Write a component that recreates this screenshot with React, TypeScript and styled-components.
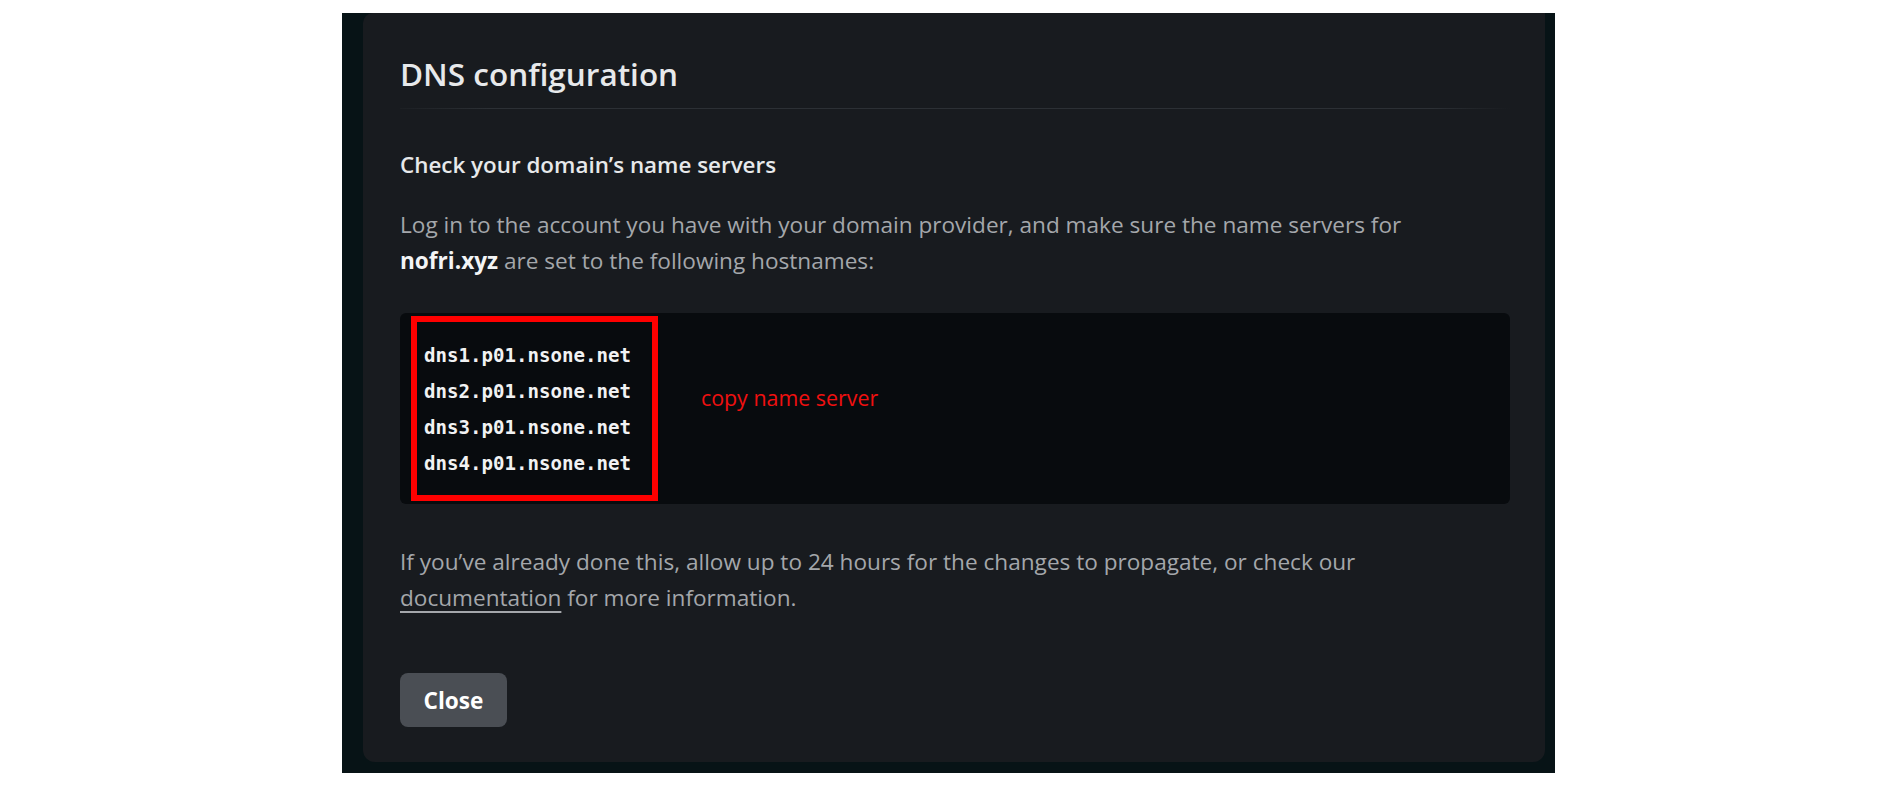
import React from "react";
import styled, { createGlobalStyle } from "styled-components";

const GlobalStyle = createGlobalStyle`
  html, body { margin: 0; padding: 0; background: #ffffff; }
  * { box-sizing: border-box; }
`;

const Page = styled.div`
  padding: 13px 0 0 342px;
  font-family: "Segoe UI", "Open Sans", "Noto Sans", sans-serif;
`;

const Backdrop = styled.div`
  width: 1213px;
  height: 760px;
  background: #071316;
  padding-left: 21px;
  display: flex;
`;

const Card = styled.section`
  width: 1182px;
  height: 749px;
  background: #181b1f;
  border-radius: 10px 0 12px 12px;
  padding: 41px 35px 0 37px;
  display: flex;
  flex-direction: column;
  align-items: flex-start;
`;

const Title = styled.h2`
  margin: 0;
  font-size: 31.5px;
  line-height: 40px;
  font-weight: 600;
  color: #e7e9eb;
`;

const Divider = styled.div`
  align-self: stretch;
  height: 1px;
  margin-top: 14px;
  background: linear-gradient(
    to right,
    rgba(44, 48, 53, 0.2) 0%,
    #2c3035 8%,
    #2c3035 93%,
    rgba(44, 48, 53, 0) 100%
  );
`;

const Heading = styled.h3`
  margin: 41px 0 0;
  font-size: 22.4px;
  line-height: 30px;
  font-weight: 600;
  color: #e7e9eb;
`;

const Para = styled.p<{ $gap: number }>`
  margin: ${(p) => p.$gap}px 0 0;
  font-size: 22.6px;
  line-height: 36px;
  color: #a4a7ab;
  max-width: 1070px;

  strong {
    color: #f3f4f5;
    font-weight: 700;
  }
  a {
    color: #a4a7ab;
    text-decoration: underline;
    text-underline-offset: 5px;
  }
`;

const CodeBox = styled.div`
  align-self: stretch;
  margin-top: 34px;
  height: 191px;
  background: #080b0e;
  border-radius: 6px;
  padding-left: 11px;
  display: flex;
  align-items: center;
`;

const Highlight = styled.div`
  border: 6px solid #ff0000;
  padding: 16px 21px 13px 7px;
`;

const CodeLine = styled.div`
  font-family: "DejaVu Sans Mono", "Liberation Mono", monospace;
  font-weight: 700;
  font-size: 19.1px;
  line-height: 36px;
  color: #f1f2f3;
  white-space: nowrap;
`;

const Note = styled.span`
  margin: 0 0 21px 43px;
  color: #f01010;
  font-size: 21.4px;
  line-height: 28px;
`;

const CloseButton = styled.button`
  margin-top: 57px;
  width: 107px;
  height: 54px;
  border: none;
  border-radius: 8px;
  background: #4a4e54;
  color: #ffffff;
  font-family: inherit;
  font-size: 22.6px;
  font-weight: 700;
  cursor: pointer;
`;

const servers = [
  "dns1.p01.nsone.net",
  "dns2.p01.nsone.net",
  "dns3.p01.nsone.net",
  "dns4.p01.nsone.net",
];

export default function App() {
  return (
    <>
      <GlobalStyle />
      <Page>
        <Backdrop>
          <Card>
            <Title>DNS configuration</Title>
            <Divider />
            <Heading>Check your domain’s name servers</Heading>
            <Para $gap={27}>
              Log in to the account you have with your domain provider, and make sure the name
              servers for <strong>nofri.xyz</strong> are set to the following hostnames:
            </Para>
            <CodeBox>
              <Highlight>
                {servers.map((s) => (
                  <CodeLine key={s}>{s}</CodeLine>
                ))}
              </Highlight>
              <Note>copy name server</Note>
            </CodeBox>
            <Para $gap={40}>
              If you’ve already done this, allow up to 24 hours for the changes to propagate, or
              check our <a href="#">documentation</a> for more information.
            </Para>
            <CloseButton>Close</CloseButton>
          </Card>
        </Backdrop>
      </Page>
    </>
  );
}
